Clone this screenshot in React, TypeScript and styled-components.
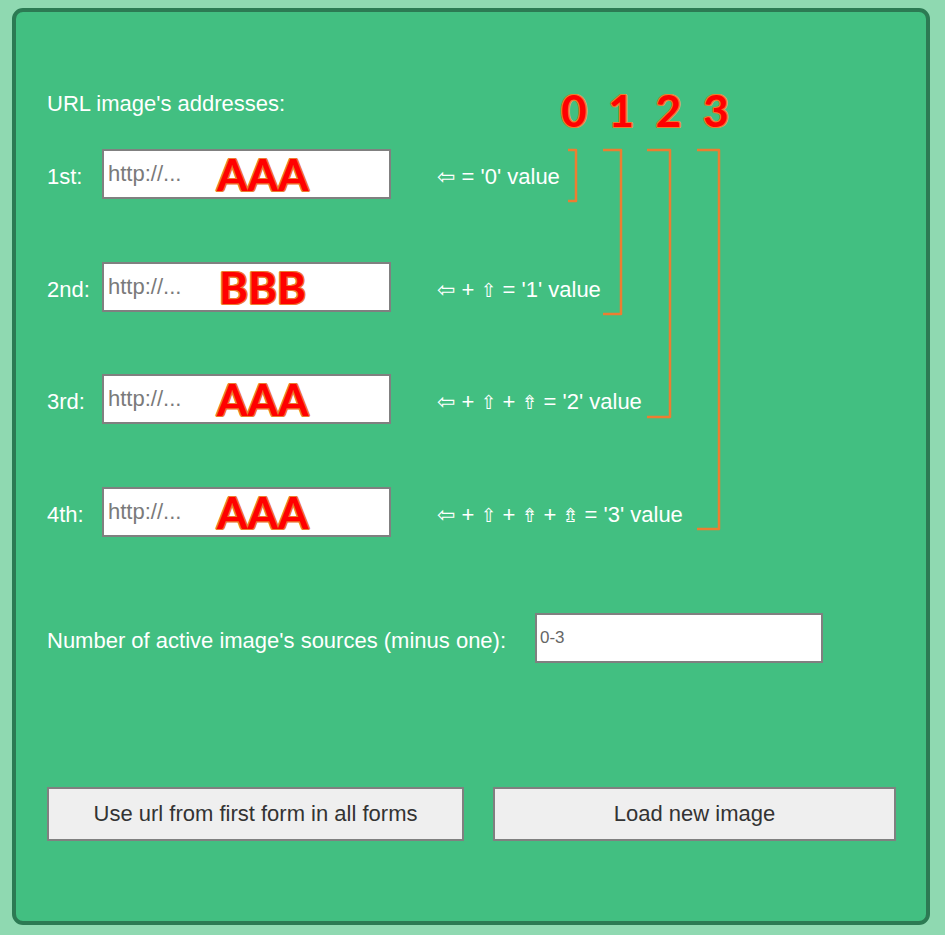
import React from 'react';
import styled, { createGlobalStyle } from 'styled-components';

const Global = createGlobalStyle`
  html, body { margin: 0; padding: 0; background: #8fd9b1; }
  body { font-family: "Liberation Sans", Arial, sans-serif; }
`;

const ORANGE = '#ed7d31';

const Page = styled.div`
  box-sizing: border-box;
  width: 945px;
  height: 935px;
  padding: 8px 15px 10px 12px;
`;

const Panel = styled.section`
  box-sizing: border-box;
  width: 918px;
  height: 917px;
  background: #42bf81;
  border: 4px solid #2c7a53;
  border-radius: 11px;
  padding: 76px 30px 0 31px;
  display: flex;
  flex-direction: column;
  color: #ffffff;
  font: 400 22px/26px "Liberation Sans", Arial, sans-serif;
`;

const Header = styled.div`
  display: flex;
  align-items: flex-start;
  height: 44px;
`;

const Title = styled.h2`
  margin: 3px 0 0;
  width: 514px;
  font: inherit;
`;

const Digits = styled.div`
  display: flex;
  gap: 21.3px;
`;

const outline = `
  text-shadow:
    1.4px 0 ${ORANGE}, -1.4px 0 ${ORANGE}, 0 1.4px ${ORANGE}, 0 -1.4px ${ORANGE},
    1px 1px ${ORANGE}, -1px -1px ${ORANGE}, 1px -1px ${ORANGE}, -1px 1px ${ORANGE};
`;

const Digit = styled.span`
  width: 26px;
  text-align: center;
  font: 700 44px/44px Lato, "Open Sans", sans-serif;
  color: #ff0000;
  ${outline}
`;

const Rows = styled.div`
  position: relative;
  display: flex;
  flex-direction: column;
  gap: 62.67px;
  margin-top: 17px;
`;

const Row = styled.div`
  display: flex;
  align-items: center;
  height: 50px;
`;

const RowLabel = styled.label`
  width: 55px;
  padding-top: 6px;
`;

const UrlField = styled.div`
  position: relative;
  width: 289px;
  height: 50px;
`;

const TextInput = styled.input<{ $small?: boolean }>`
  box-sizing: border-box;
  width: 100%;
  height: 100%;
  margin: 0;
  border: 2px solid #808080;
  background: #ffffff;
  padding: 0 ${(p) => (p.$small ? 3 : 4)}px;
  font: 400 ${(p) => (p.$small ? 17 : 22)}px "Liberation Sans", Arial, sans-serif;
  color: #333;
  outline: none;
  &::placeholder {
    color: ${(p) => (p.$small ? '#666666' : '#7a7a7a')};
  }
`;

const Marker = styled.span<{ $left: number }>`
  position: absolute;
  left: ${(p) => p.$left}px;
  top: 50%;
  transform: translateY(-50%);
  pointer-events: none;
  font: 700 44px/44px Lato, "Open Sans", sans-serif;
  color: #ff0000;
  ${outline}
`;

const Hint = styled.span`
  margin-left: 46px;
  padding-top: 6px;
  white-space: nowrap;
`;

const Key = styled.span<{ $upright?: boolean }>`
  font-family: "DejaVu Sans", sans-serif;
  font-size: ${(p) => (p.$upright ? 19 : 22)}px;
  line-height: 26px;
`;

const Brackets = styled.svg`
  position: absolute;
  left: 0;
  top: 0;
  width: 100%;
  height: 100%;
  overflow: visible;
  pointer-events: none;
`;

const CountRow = styled.div`
  display: flex;
  align-items: center;
  margin-top: 76px;
  height: 50px;
`;

const CountLabel = styled.label`
  flex: 0 0 488px;
  padding-top: 7px;
`;

const CountField = styled.div`
  width: 288px;
  height: 50px;
`;

const Buttons = styled.div`
  display: grid;
  grid-template-columns: 417px 1fr;
  gap: 29px;
  margin-top: 124px;
`;

const Button = styled.button`
  height: 54px;
  margin: 0;
  background: #efefef;
  border: 2px solid #808080;
  color: #333333;
  font: 400 22px "Liberation Sans", Arial, sans-serif;
  cursor: pointer;
`;

const rows = [
  { label: '1st:', marker: 'AAA', left: 115, keys: ['⇦'], value: '0' },
  { label: '2nd:', marker: 'BBB', left: 117, keys: ['⇦', '⇧'], value: '1' },
  { label: '3rd:', marker: 'AAA', left: 115, keys: ['⇦', '⇧', '⇮'], value: '2' },
  { label: '4th:', marker: 'AAA', left: 115, keys: ['⇦', '⇧', '⇮', '⇯'], value: '3' },
];

const bracketPaths = [
  'M 521 1 H 529 V 52 H 521',
  'M 556 1 H 574 V 165 H 556',
  'M 600 1 H 623 V 268 H 600',
  'M 650 1 H 672 V 380 H 650',
];

export default function App() {
  return (
    <Page>
      <Global />
      <Panel>
        <Header>
          <Title>URL image's addresses:</Title>
          <Digits>
            {['0', '1', '2', '3'].map((d) => (
              <Digit key={d}>{d}</Digit>
            ))}
          </Digits>
        </Header>

        <Rows>
          {rows.map((r) => (
            <Row key={r.label}>
              <RowLabel>{r.label}</RowLabel>
              <UrlField>
                <TextInput placeholder="http://..." />
                <Marker $left={r.left}>{r.marker}</Marker>
              </UrlField>
              <Hint>
                {r.keys.map((k, i) => (
                  <React.Fragment key={k}>
                    {i > 0 && ' + '}
                    <Key $upright={i > 0}>{k}</Key>
                  </React.Fragment>
                ))}
                {` = '${r.value}' value`}
              </Hint>
            </Row>
          ))}
          <Brackets>
            {bracketPaths.map((d) => (
              <path key={d} d={d} fill="none" stroke={ORANGE} strokeWidth={2.5} strokeLinejoin="round" />
            ))}
          </Brackets>
        </Rows>

        <CountRow>
          <CountLabel>Number of active image's sources (minus one):</CountLabel>
          <CountField>
            <TextInput $small placeholder="0-3" />
          </CountField>
        </CountRow>

        <Buttons>
          <Button>Use url from first form in all forms</Button>
          <Button>Load new image</Button>
        </Buttons>
      </Panel>
    </Page>
  );
}
